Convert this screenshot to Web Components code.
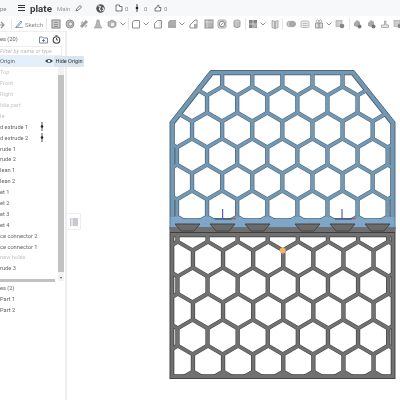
<!DOCTYPE html>
<html>
<head>
<meta charset="utf-8">
<style>
  html, body { margin: 0; padding: 0; background: #fff; }
  body { font-family: Roboto, "Liberation Sans", sans-serif; }
</style>
</head>
<body>
<app-shell></app-shell>
<script>
const ICONS = {
  arrow: '<path d="M-2 6h6M2 3l3 3-3 3" fill="none" stroke="#666" stroke-width="1.2"/>',
  sheet: '<rect x="1" y="1" width="8" height="8" fill="#bbb" stroke="#555"/><path d="M3 3.5h4M3 5.5h4M3 7.5h4" stroke="#555" stroke-width=".8"/>',
  ring: '<circle cx="5" cy="5" r="4" fill="#aaa" stroke="#666"/><circle cx="5.5" cy="5" r="2" fill="#eee" stroke="#666"/>',
  link: '<path d="M2 8l3-3M5 5l3-3" stroke="#777" stroke-width="3"/><path d="M2 4.500l2-2M6 8l2-2" stroke="#999" stroke-width="1.500"/>',
  bell: '<path d="M4 1h2l1 5 2 3H1l2-3z" fill="#999" stroke="#777" stroke-width=".6"/>',
  cube: '<path d="M1 3l4-2 4 2v4l-4 2-4-2z" fill="#999" stroke="#666" stroke-width=".7"/><path d="M4 4h3v3H4z" fill="#eee"/>',
  fillet: '<path d="M1.500 9V4q0-2.500 2.500-2.500h4.500V9z" fill="#fff" stroke="#666"/>',
  chamfer: '<path d="M1.500 9V4.500l3-3h4V9z" fill="#fff" stroke="#666"/><path d="M7 2v7" stroke="#bbb"/>',
  stack: '<path d="M1 9V3l2-2h6v8z" fill="#888"/><path d="M3 3h6M3 5h6" stroke="#aaa" stroke-width=".6"/>',
  wedge: '<path d="M1 9V6l5-5h2v8z" fill="#fff" stroke="#666"/><path d="M5 9V5h3v4z" fill="#888"/>',
  box: '<rect x="1" y="1" width="8" height="8" fill="#999" stroke="#666"/><path d="M3 1v8M1 3h8" stroke="#ddd" stroke-width=".7"/>',
  target: '<rect x="1" y="1" width="8" height="8" rx="1.500" fill="#ccc" stroke="#888"/><circle cx="5" cy="5" r="2.800" fill="#eee" stroke="#666"/><path d="M3.500 6.500l3-3" stroke="#777"/>',
  can: '<ellipse cx="5" cy="2.500" rx="3" ry="1.500" fill="#ccc" stroke="#666" stroke-width=".8"/><path d="M2 2.500v5q3 2.500 6 0v-5" fill="#aaa" stroke="#666" stroke-width=".8"/>',
  grid: '<rect x="1" y="1" width="8" height="8" fill="#555"/><path d="M5 1v8M1 5h8" stroke="#ddd" stroke-width=".8"/><rect x="5.500" y="5.500" width="3" height="3" fill="#999"/>',
  book: '<path d="M2 1.500l3 1v7l-3-1zM5 2.500l3-1v7l-3 1z" fill="#ccc" stroke="#777" stroke-width=".8"/>',
  ovals: '<ellipse cx="3.800" cy="5" rx="3" ry="2.800" fill="#bbb" stroke="#777" stroke-width=".8"/><ellipse cx="6.500" cy="5" rx="3" ry="2.800" fill="#888" stroke="#777" stroke-width=".8"/>',
  panel: '<rect x="1" y="2" width="8" height="6.500" rx="1.500" fill="#e8e8e8" stroke="#888" stroke-width=".8"/><path d="M2.500 4.500h5M2.500 6.500h5" stroke="#888" stroke-width=".7"/>',
  gift: '<path d="M1.500 4h7v5h-7z" fill="#ccc" stroke="#666" stroke-width=".8"/><path d="M5 4v5" stroke="#555"/><circle cx="3.500" cy="2.300" r="1.300" fill="#fff" stroke="#666" stroke-width=".7"/><circle cx="6.500" cy="2.300" r="1.300" fill="#fff" stroke="#666" stroke-width=".7"/>',
  gearbox: '<rect x="1" y="1.500" width="6" height="6" fill="#bbb" stroke="#888" stroke-width=".7"/><circle cx="7" cy="7" r="2.300" fill="#555"/>',
  gear: '<path d="M2 4l3-3 3 2v3l-3 2-3-1z" fill="#888"/><circle cx="7.500" cy="7.500" r="2" fill="#444"/>',
  hand: '<path d="M1.500 8.500V6h3V2h1.500v4h2.500v2.500z" fill="#ddd" stroke="#777" stroke-width=".8"/>'
};

class ToolIcon extends HTMLElement {
  constructor() {
    super();
    const kind = this.getAttribute("kind");
    this.attachShadow({ mode: "open" }).innerHTML = `
      <style>
        :host { display: flex; flex: none; align-items: center; justify-content: center; height: 100%; }
        svg { width: 10px; height: 10px; overflow: visible; opacity: .72; }
        .chev { width: 6px; height: 4px; }
        .div { width: 1px; height: 12px; background: #e6e6e6; }
      </style>
      ${kind === "chev"
        ? '<svg class="chev" viewBox="0 0 6 4"><path d="M.5.5L3 3 5.500.5" fill="none" stroke="#666" stroke-width="1"/></svg>'
        : kind === "div"
        ? '<div class="div"></div>'
        : `<svg viewBox="0 0 10 10">${ICONS[kind]}</svg>`}`;
    this.style.width = this.getAttribute("w") + "px";
  }
}
customElements.define("tool-icon", ToolIcon);

class TitleBar extends HTMLElement {
  constructor() {
    super();
    this.attachShadow({ mode: "open" }).innerHTML = `
      <style>
        :host { display: flex; align-items: center; height: 16px; background: #f7f8fa; color: #666; font-size: 6px; overflow: hidden; }
        .crumb { width: 18px; color: #888; }
        .burger { width: 6.500px; height: 6.500px; margin-right: 5.500px; border-top: 1.500px solid #333; border-bottom: 1.500px solid #333; position: relative; box-sizing: border-box; flex: none; }
        .burger i { position: absolute; left: 0; right: 0; top: 1px; height: 1.500px; background: #333; }
        b { font-size: 9.800px; color: #3a3a3a; width: 27px; font-weight: 700; }
        .main { color: #999; width: 18px; }
        svg { flex: none; width: 8px; height: 8px; }
        .n { width: 8px; margin-left: 2px; color: #888; }
      </style>
      <span class="crumb">pe</span>
      <span class="burger"><i></i></span>
      <b>plate</b>
      <span class="main">Main</span>
      <svg viewBox="0 0 8 8" style="margin-right:13px"><path d="M1 7l1-2.500L5 1.500l1.500 1.500-3 3z" fill="none" stroke="#777"/></svg>
      <svg viewBox="0 0 8 8" style="margin-right:10px;width:9px;height:9px"><circle cx="4" cy="4" r="3.800" fill="#555"/><path d="M2 1.500l2 1-1 2 1.500 2M6 3l1 2-1.500 1" stroke="#eee" fill="none"/></svg>
      <svg viewBox="0 0 8 8"><path d="M1 1h3.500v1.500H7V7H1z" fill="#fff" stroke="#555" stroke-width=".8"/></svg>
      <span class="n">0</span>
      <svg viewBox="0 0 8 8"><path d="M4 0v8" stroke="#444"/><circle cx="4" cy="4" r="1.300" fill="#222"/></svg>
      <span class="n" style="margin-left:3px;margin-right:2px">0</span>
      <svg viewBox="0 0 8 8"><path d="M1 4h1.500L4 1l1 .5V3.500h2L6.500 7H1z" fill="#fff" stroke="#555" stroke-width=".8"/></svg>
      <span class="n">0</span>`;
  }
}
customElements.define("title-bar", TitleBar);

class ToolBar extends HTMLElement {
  constructor() {
    super();
    const items = [
      ["sheet",14],["ring",14],["link",14],["bell",14],["cube",14],["chev",8],["div",3],
      ["fillet",11],["chev",9],["chamfer",16],["stack",12],["chev",8],["wedge",16],
      ["box",13],["target",14],["can",15],["div",3],["grid",11],["chev",10],["book",13],["div",3],
      ["ovals",13],["panel",15],["gift",14],["chev",6],["gearbox",16],["div",2],
      ["gear",13],["gear",15],["hand",14],["gearbox",12]
    ];
    this.attachShadow({ mode: "open" }).innerHTML = `
      <style>
        :host { display: flex; align-items: center; height: 14px; padding-top: 1px; background: #fff; color: #888; font-size: 6px; overflow: hidden; }
        .sketch { display: flex; align-items: center; flex: none; width: 28px; gap: 2px; height: 100%; }
        svg { width: 8px; height: 8px; flex: none; }
      </style>
      <tool-icon kind="arrow" w="8"></tool-icon>
      <tool-icon kind="div" w="7"></tool-icon>
      <span class="sketch"><svg viewBox="0 0 8 8"><path d="M1 7L6 1l1 1-5 5.500zM0 7.700h8" fill="none" stroke="#6a7fa8" stroke-width=".8"/></svg>Sketch</span>
      <tool-icon kind="div" w="6"></tool-icon>
      ${items.map(([k, w]) => `<tool-icon kind="${k}" w="${w}"></tool-icon>`).join("")}`;
  }
}
customElements.define("tool-bar", ToolBar);

class FeatureRow extends HTMLElement {
  constructor() {
    super();
    this.attachShadow({ mode: "open" }).innerHTML = `
      <style>
        :host { display: flex; align-items: center; height: 10.900px; font-size: 5.700px; color: #666; white-space: nowrap; position: relative; }
        :host([muted]) { color: #c6c6c6; }
        :host([active]) { background: #e4f0f9; color: #667; }
        svg { position: absolute; left: 39.500px; top: 1px; width: 4px; height: 9px; }
      </style>
      <slot></slot>
      ${this.hasAttribute("pinned") ? '<svg viewBox="0 0 4 9"><path d="M2 0v9" stroke="#555"/><circle cx="2" cy="4.500" r="1.300" fill="#222"/></svg>' : ""}`;
  }
}
customElements.define("feature-row", FeatureRow);

class FeaturePanel extends HTMLElement {
  constructor() {
    super();
    const rows = [
      ["Top",1],["Front",1],["Right",1],["Idle part",1],["le",1],
      ["d extrude 1",0,1],["d extrude 2",0,1],["rude 1"],["rude 2"],["lean 1"],["lean 2"],
      ["et 1"],["et 2"],["et 3"],["et 4"],["ce connector 2"],["ce connector 1"],["new holes",1],["rude 3"]
    ];
    this.attachShadow({ mode: "open" }).innerHTML = `
      <style>
        :host { display: flex; flex-direction: column; flex: none; width: 65px; border-right: 2px solid #eee; border-top: 1px solid #eee; background: #fff; font-size: 5.700px; color: #666; position: relative; }
        .head { display: flex; align-items: center; height: 14px; flex: none; }
        .head span { flex: 1; }
        .head svg { width: 9px; height: 9px; margin-right: 4px; flex: none; }
        .filter { height: 10px; flex: none; width: 62px; box-sizing: border-box; border: 1px solid #eee; border-left: 0; color: #bbb; font-style: italic; line-height: 8px; font-size: 5.600px; white-space: nowrap; overflow: hidden; }
        .list { display: flex; flex: none; height: 225px; }
        .rows { width: 58px; flex: none; overflow: hidden; position: relative; }
        .vbar { width: 6px; flex: none; background: #f2f2f2; position: relative; }
        .thumb { position: absolute; left: 0; right: 0; top: 19px; height: 197px; background: #c2c2c2; }
        .arrow { position: absolute; left: 1.500px; top: 221px; border: 1.500px solid transparent; border-top: 2px solid #555; }
        .hbar { position: absolute; left: 0; top: 247px; width: 55px; height: 2.500px; background: #c2c2c2; }
        .eye { position: absolute; left: 45px; top: 2.300px; width: 8px; height: 6px; }
        .tip { position: absolute; left: 54px; top: 23.500px; width: 30px; height: 11px; background: #d9e6ef; color: #333; font-size: 5.500px; line-height: 11px; text-align: center; white-space: nowrap; border-radius: 1px; z-index: 2; }
        .group { margin-top: 2px; }
      </style>
      <div class="head">
        <span>es (20)</span>
        <svg viewBox="0 0 9 9"><path d="M.5 2h3l1 1h4v5H.5z" fill="#fff" stroke="#668" stroke-width=".8"/><path d="M3 5.500h3M4.500 4v3" stroke="#468" stroke-width=".8"/></svg>
        <svg viewBox="0 0 9 9"><circle cx="4.500" cy="5" r="3.300" fill="#fff" stroke="#444" stroke-width="1.100"/><path d="M3.500.7h2M4.500 3v2h1.500" stroke="#444" stroke-width=".9" fill="none"/></svg>
      </div>
      <div class="filter">Filter by name or type</div>
      <div class="list">
        <div class="rows">
          <feature-row active>Origin</feature-row>
          ${rows.map(([t, m, p]) => `<feature-row ${m ? "muted" : ""} ${p ? "pinned" : ""}>${t}</feature-row>`).join("")}
          <svg class="eye" viewBox="0 0 8 6"><path d="M0 3q4-4 8 0q-4 4-8 0z" fill="#444"/><circle cx="4" cy="3" r="1.300" fill="#fff"/></svg>
        </div>
        <div class="vbar"><div class="thumb"></div><div class="arrow"></div></div>
        <div class="hbar"></div>
      </div>
      <div class="group">
        <feature-row>es (2)</feature-row>
        <feature-row>Part 1</feature-row>
        <feature-row>Part 2</feature-row>
      </div>
      <div class="tip">Hide Origin</div>`;
  }
}
customElements.define("feature-panel", FeaturePanel);

class ModelView extends HTMLElement {
  constructor() {
    super();
    const P = 30.1;
    const hex = (cx, cy, a) => {
      const r = a * 2 / Math.sqrt(3);
      return [[0,-r],[a,-r/2],[a,r/2],[0,r],[-a,r/2],[-a,-r/2]].map(p => (cx+p[0]).toFixed(1)+","+(cy+p[1]).toFixed(1)).join(" ");
    };
    const cells = (rows, a) => {
      let out = "";
      for (const [y, start] of rows)
        for (let x = start - P; x < 410; x += P)
          out += `<polygon points="${hex(x, y, a)}"/>`;
      return out;
    };
    const upperRows = [[78,177],[104,192],[130,177],[156,192],[182,177],[208,192]];
    const lowerRows = [[233,192.5],[259,177.900],[285,192.5],[311,177.900],[337,192.5],[363,177.900]];
    const teeth = [175,210,245,295,330,365].map(x =>
      `<path d="M${x} 224h25l-6 7h-13z" fill="#6b6b6b" stroke="#444" stroke-width="1"/>`).join("");

    this.attachShadow({ mode: "open" }).innerHTML = `
      <style>
        :host { display: block; flex: 1; position: relative; background: #fff; overflow: hidden; }
        svg { display: block; width: 333px; height: 369px; }
        .tab { position: absolute; left: 0; top: 182px; width: 13px; height: 15px; background: #fff; border: 1px solid #eee; border-left: 0; display: flex; align-items: center; justify-content: center; }
        .tab svg { width: 8px; height: 8px; }
      </style>
      <svg viewBox="67 31 333 369">
        <defs>
          <clipPath id="ui"><polygon points="174,123.500 212.500,74.500 352,74.500 391,123.500 391,219 174,219"/></clipPath>
          <clipPath id="ui2"><polygon points="174.800,124 213,75.300 351.500,75.300 390.200,124 390.200,218.200 174.800,218.200"/></clipPath>
          <clipPath id="li"><rect x="173.500" y="236.500" width="218" height="138.500"/></clipPath>
          <clipPath id="li2"><rect x="174.300" y="237.300" width="216.400" height="136.900"/></clipPath>
        </defs>
        <polygon points="170,122 210.500,70.500 354,70.500 395,122 395,229 170,229" fill="#7497b2" stroke="#4a6a82" stroke-width="1"/>
        <rect x="170.500" y="217" width="224" height="12" fill="#7fa6c6"/>
        <g clip-path="url(#ui)" fill="#3f5d74">${cells(upperRows, 13.500)}</g>
        <g clip-path="url(#ui2)" fill="#fff">${cells(upperRows, 12.900)}</g>
        <rect x="170" y="228" width="225" height="150.500" fill="#717171" stroke="#444" stroke-width="1"/>
        <rect x="170" y="228" width="225" height="5" fill="#6f6f6f"/>
        <path d="M170 232.500h225" stroke="#3e3e3e"/>
        ${teeth}
        <g clip-path="url(#li)" fill="#3d3d3d">${cells(lowerRows, 13.500)}</g>
        <g clip-path="url(#li2)" fill="#fff">${cells(lowerRows, 12.900)}</g>
        <path d="M222.700 209v9M342 209v9" stroke="#3a3ab0" stroke-width="1"/>
        <path d="M215 219h17M335 219h17" stroke="#2d3f66" stroke-width="1"/>
        <path d="M232 218.500h4M352 218.500h4" stroke="#b8505c" stroke-width="1.500"/>
        <circle cx="282.700" cy="250.500" r="3" fill="#f2b36e"/>
      </svg>
      <div class="tab"><svg viewBox="0 0 8 8"><path d="M2.500 1H8M2.500 3H8M2.500 5H8M2.500 7H8M0 1h1.500M0 3h1.500M0 5h1.500M0 7h1.500" stroke="#778" stroke-width=".8"/></svg></div>`;
  }
}
customElements.define("model-view", ModelView);

class AppShell extends HTMLElement {
  constructor() {
    super();
    this.attachShadow({ mode: "open" }).innerHTML = `
      <style>
        :host { display: flex; flex-direction: column; width: 400px; height: 400px; overflow: hidden; font-family: Roboto, "Liberation Sans", sans-serif; filter: blur(0.3px); }
        .work { display: flex; flex: 1; min-height: 0; }
      </style>
      <title-bar></title-bar>
      <tool-bar></tool-bar>
      <div class="work">
        <feature-panel></feature-panel>
        <model-view></model-view>
      </div>`;
  }
}
customElements.define("app-shell", AppShell);
</script>
</body>
</html>
